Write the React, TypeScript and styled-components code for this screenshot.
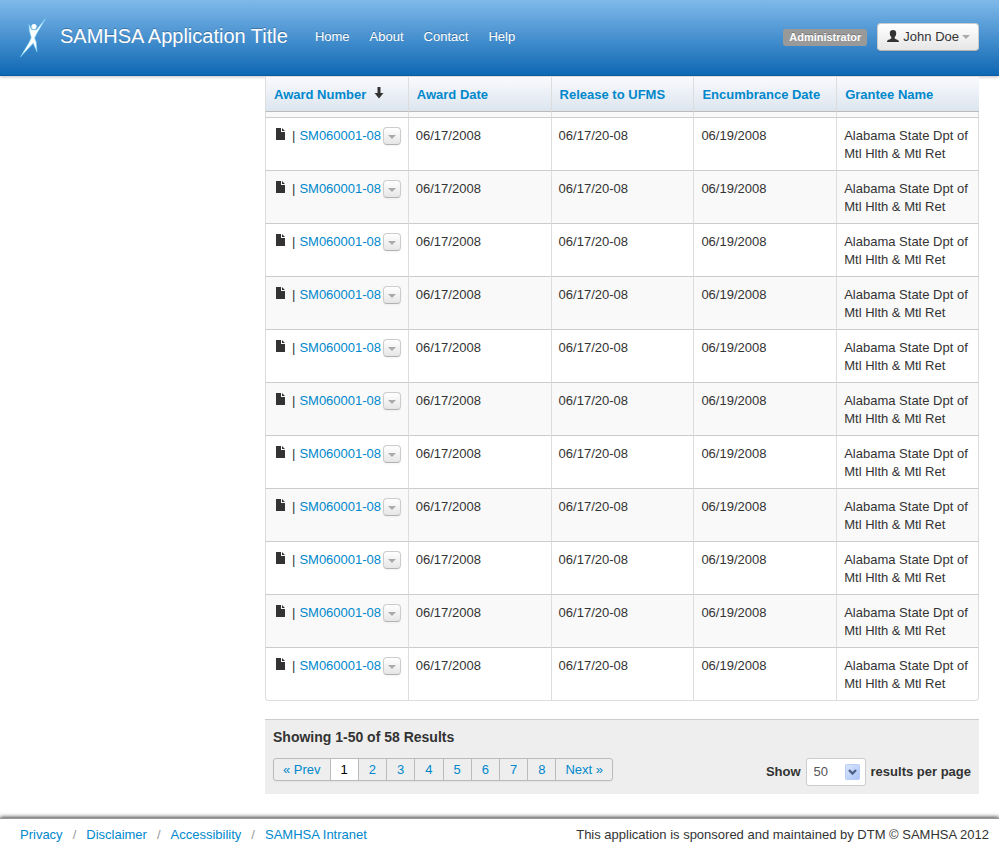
import React from "react";
import styled, { createGlobalStyle } from "styled-components";

const GlobalStyle = createGlobalStyle`
  * { box-sizing: border-box; }
  html, body { margin: 0; padding: 0; background: #fff; }
  body, button, select {
    font-family: "Liberation Sans", Arial, Helvetica, sans-serif;
    font-size: 13px;
    line-height: 18px;
    color: #333;
  }
  a { color: #0088cc; text-decoration: none; }
  a:hover { text-decoration: underline; }
`;

const Page = styled.div`
  display: flex;
  flex-direction: column;
  min-height: 100vh;
`;

const Header = styled.header`
  display: flex;
  align-items: center;
  height: 76px;
  padding: 0 20px;
  background: linear-gradient(#7fb9ea, #0f68b4);
  border-bottom: 1px solid #0c5ba2;
  box-shadow: 0 1px 3px rgba(0, 0, 0, 0.25);
`;

const Brand = styled.a`
  display: flex;
  align-items: center;
  gap: 14px;
  color: #fff;
  font-size: 20px;
  line-height: 36px;
  white-space: nowrap;
  text-shadow: 0 -1px 0 rgba(0, 0, 0, 0.25);
  &:hover { text-decoration: none; }
  span { margin-bottom: 4px; }
`;

const Nav = styled.nav`
  display: flex;
  flex: 1;
  gap: 20px;
  margin: 0 0 2px 27px;
`;

const NavLink = styled.a`
  color: #fff;
  text-shadow: 0 -1px 0 rgba(0, 0, 0, 0.25);
`;

const RoleLabel = styled.span`
  margin-right: 10px;
  padding: 1px 6px 2px;
  border-radius: 3px;
  background: #999;
  color: #fff;
  font-size: 11px;
  font-weight: bold;
  line-height: 14px;
  text-shadow: 0 -1px 0 rgba(0, 0, 0, 0.25);
`;

const UserButton = styled.button`
  display: flex;
  align-items: center;
  gap: 3px;
  height: 28px;
  margin-bottom: 2px;
  padding: 0 8px;
  border: 1px solid #ccc;
  border-bottom-color: #b3b3b3;
  border-radius: 4px;
  background: linear-gradient(#fff, #e6e6e6);
  box-shadow: 0 1px 2px rgba(0, 0, 0, 0.05);
  white-space: nowrap;
`;

const Content = styled.main`
  flex: 1;
  margin: 0 20px 24px 265px;
`;

const AwardsTable = styled.table`
  width: 100%;
  table-layout: fixed;
  border-collapse: separate;
  border-spacing: 0;
`;

const HeadCell = styled.th`
  height: 36px;
  padding: 1px 0 0 8px;
  border-left: 1px solid #ddd;
  border-top: 1px solid #ddd;
  border-bottom: 1px solid #bbb;
  background: linear-gradient(#fafafd, #dce5ef);
  text-align: left;
  white-space: nowrap;
  svg { margin-left: 8px; vertical-align: 0; }
`;

const Cell = styled.td`
  padding: 9px 7px 7px;
  border-left: 1px solid #ddd;
  border-top: 1px solid #ccc;
  vertical-align: top;
  line-height: 18px;
  &:first-child { white-space: nowrap; }
  &:last-child { border-right: 1px solid #ddd; }
`;

const SpacerCell = styled.td`
  height: 5px;
  padding: 0;
  border-left: 1px solid #ddd;
  background: #f9f9f9;
  &:last-child { border-right: 1px solid #ddd; }
`;

const Row = styled.tr<{ $striped: boolean }>`
  background: ${(p) => (p.$striped ? "#f9f9f9" : "#fff")};
  &:last-child ${Cell} { border-bottom: 1px solid #ddd; }
  &:last-child ${Cell}:first-child { border-bottom-left-radius: 4px; }
  &:last-child ${Cell}:last-child { border-bottom-right-radius: 4px; }
`;

const AwardLine = styled.div`
  display: flex;
  align-items: center;
  height: 18px;
  svg { flex: none; }
`;

const Divider = styled.span`
  margin: 0 4px 0 5px;
`;

const MenuButton = styled.button`
  display: flex;
  flex: none;
  align-items: center;
  justify-content: center;
  width: 18px;
  height: 18px;
  margin-left: 2px;
  padding: 2px 0 0;
  border: 1px solid #ccc;
  border-bottom-color: #b3b3b3;
  border-radius: 4px;
  background: linear-gradient(#fff, #e6e6e6);
  box-shadow: 0 1px 2px rgba(0, 0, 0, 0.05);
`;

const ResultsBar = styled.section`
  margin-top: 18px;
  padding: 8px;
  border-top: 1px solid #ccc;
  background: #eee;
  font-weight: bold;
`;

const ResultsTitle = styled.h2`
  margin: 0;
  font-size: 14px;
  line-height: 18px;
`;

const ResultsControls = styled.div`
  display: flex;
  align-items: flex-start;
  justify-content: space-between;
  margin-top: 12px;
`;

const Pager = styled.nav`
  display: flex;
  border: 1px solid #bbb;
  border-radius: 3px;
  box-shadow: 0 1px 2px rgba(0, 0, 0, 0.05);
  font-weight: normal;
`;

const PageLink = styled.a<{ $current?: boolean }>`
  min-width: 28px;
  padding: 1px 10px;
  border-left: 1px solid #bbb;
  line-height: 19px;
  white-space: nowrap;
  background: ${(p) => (p.$current ? "#fff" : "transparent")};
  color: ${(p) => (p.$current ? "#000" : "#0088cc")};
  &:first-child, &:last-child { padding: 1px 9px; }
  &:first-child { border-left: 0; }
`;

const PageSize = styled.label`
  display: flex;
  align-items: center;
  gap: 5px;
  white-space: nowrap;
`;

const SelectBox = styled.span`
  display: grid;
  align-items: center;
  & > * { grid-area: 1 / 1; }
  svg { justify-self: end; margin-right: 6px; pointer-events: none; }
`;

const Select = styled.select`
  appearance: none;
  width: 60px;
  height: 28px;
  padding: 0 7px;
  border: 1px solid #ccc;
  border-radius: 3px;
  background: #fff;
  color: #555;
`;

const Footer = styled.footer`
  display: flex;
  justify-content: space-between;
  height: 34px;
  padding: 7px 10px 8px 20px;
  border-top: 1px solid #999;
  box-shadow: 0 -1px 4px rgba(0, 0, 0, 0.75);
  white-space: nowrap;
`;

const FooterLinks = styled.nav`
  display: flex;
  gap: 10px;
  color: #999;
`;

const LogoIcon = () => (
  <svg width="26" height="40" viewBox="0 0 26 40" aria-hidden="true">
    <path
      d="M25.6 0.5 L17.4 14.5 L14.6 20 L16.2 24 L17 34 L13.2 25.2 L0.4 39 L9.6 23.4 L11.2 19.5 L9.4 13 L8.9 6.4 L11.8 11.8 L16.4 11.8 Z"
      fill="#fff" stroke="#6fd0f7" strokeWidth="0.6" strokeLinejoin="round"
    />
    <circle cx="14" cy="8.6" r="2.6" fill="#fff" />
  </svg>
);

const UserIcon = () => (
  <svg width="14" height="13" viewBox="0 0 14 13" aria-hidden="true">
    <path d="M7 0C5 0 3.8 1 3.8 3c0 2 .5 3 1.5 4v1.5C4 9.6 1 9.4 1 12h12c0-2.6-3-2.4-4.3-3.5V7c1-1 1.5-2 1.5-4 0-2-1.2-3-3.2-3Z" fill="#333" />
  </svg>
);

const Caret = () => (
  <svg width="8" height="4" viewBox="0 0 8 4" aria-hidden="true">
    <path d="M0 0h8L4 4Z" fill="#aaa" />
  </svg>
);

const SortIcon = () => (
  <svg width="10" height="12" viewBox="0 0 10 12" aria-hidden="true">
    <path d="M3.5 0h3v6H9.5L5 11.5 0.5 6h3Z" fill="#333" />
  </svg>
);

const FileIcon = () => (
  <svg width="14" height="18" viewBox="0 0 14 18" aria-hidden="true">
    <path d="M3 1h5v4h4v8H3Z M9 1l3 3H9Z" fill="#333" />
  </svg>
);

const SelectArrow = () => (
  <svg width="15" height="16" viewBox="0 0 15 16" aria-hidden="true">
    <defs>
      <linearGradient id="arrowFill" x1="0" y1="0" x2="1" y2="1">
        <stop offset="0" stopColor="#dbe6fe" />
        <stop offset="1" stopColor="#a9c4f7" />
      </linearGradient>
    </defs>
    <rect x="0.5" y="0.5" width="14" height="15" rx="1" fill="url(#arrowFill)" stroke="#b9cdf5" />
    <path d="M4 6l3.5 3.5L11 6" fill="none" stroke="#4d6185" strokeWidth="2.4" />
  </svg>
);

const columns = ["Award Number", "Award Date", "Release to UFMS", "Encumbrance Date", "Grantee Name"];
const awards = Array.from({ length: 11 }, (_, id) => ({
  id,
  number: "SM060001-08",
  awardDate: "06/17/2008",
  release: "06/17/20-08",
  encumbrance: "06/19/2008",
  grantee: "Alabama State Dpt of Mtl Hlth & Mtl Ret",
}));
const pages = ["« Prev", "1", "2", "3", "4", "5", "6", "7", "8", "Next »"];
const footerLinks = ["Privacy", "Disclaimer", "Accessibility", "SAMHSA Intranet"];

export default function App() {
  return (
    <Page>
      <GlobalStyle />
      <Header>
        <Brand href="#">
          <LogoIcon />
          <span>SAMHSA Application Title</span>
        </Brand>
        <Nav aria-label="Main">
          {["Home", "About", "Contact", "Help"].map((item) => (
            <NavLink href="#" key={item}>{item}</NavLink>
          ))}
        </Nav>
        <RoleLabel>Administrator</RoleLabel>
        <UserButton type="button">
          <UserIcon />
          John Doe
          <Caret />
        </UserButton>
      </Header>

      <Content>
        <AwardsTable>
          <thead>
            <tr>
              {columns.map((name, i) => (
                <HeadCell key={name} scope="col">
                  <a href="#">{name}</a>
                  {i === 0 && <SortIcon />}
                </HeadCell>
              ))}
            </tr>
          </thead>
          <tbody>
            <tr aria-hidden="true">
              {columns.map((name) => <SpacerCell key={name} />)}
            </tr>
            {awards.map((award, i) => (
              <Row key={award.id} $striped={i % 2 === 1}>
                <Cell>
                  <AwardLine>
                    <FileIcon />
                    <Divider>|</Divider>
                    <a href="#">{award.number}</a>
                    <MenuButton type="button" aria-label="Award actions"><Caret /></MenuButton>
                  </AwardLine>
                </Cell>
                <Cell>{award.awardDate}</Cell>
                <Cell>{award.release}</Cell>
                <Cell>{award.encumbrance}</Cell>
                <Cell>{award.grantee}</Cell>
              </Row>
            ))}
          </tbody>
        </AwardsTable>

        <ResultsBar>
          <ResultsTitle>Showing 1-50 of 58 Results</ResultsTitle>
          <ResultsControls>
            <Pager aria-label="Pages">
              {pages.map((page) => (
                <PageLink href="#" key={page} $current={page === "1"}>{page}</PageLink>
              ))}
            </Pager>
            <PageSize>
              Show
              <SelectBox>
                <Select defaultValue="50">
                  <option>25</option>
                  <option>50</option>
                  <option>100</option>
                </Select>
                <SelectArrow />
              </SelectBox>
              results per page
            </PageSize>
          </ResultsControls>
        </ResultsBar>
      </Content>

      <Footer>
        <FooterLinks aria-label="Footer">
          {footerLinks.map((link, i) => (
            <React.Fragment key={link}>
              {i > 0 && <span>/</span>}
              <a href="#">{link}</a>
            </React.Fragment>
          ))}
        </FooterLinks>
        <span>This application is sponsored and maintained by DTM © SAMHSA 2012</span>
      </Footer>
    </Page>
  );
}
